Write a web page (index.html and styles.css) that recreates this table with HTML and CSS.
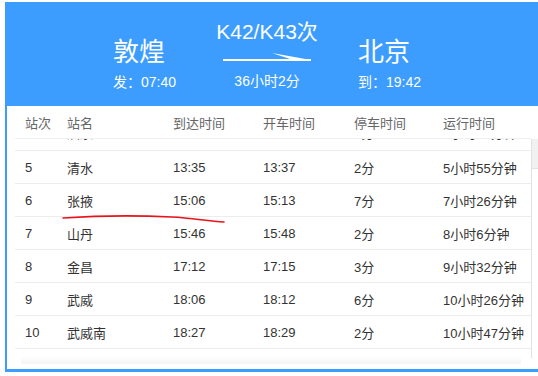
FILE: index.html
```html
<!DOCTYPE html>
<html lang="zh-CN">
<head>
<meta charset="utf-8">
<title>K42/K43次</title>
<link rel="stylesheet" href="styles.css">
</head>
<body>
<div class="frame">
  <div class="hero">
    <div class="end">
      <div class="city">敦煌</div>
      <div class="time">发：07:40</div>
    </div>
    <div class="mid">
      <div class="train">K42/K43次</div>
      <svg class="arrow" width="88" height="10" viewBox="0 0 88 10">
        <rect x="0" y="6" width="88" height="2" fill="#fff"/>
        <polygon points="49,0 88,7 70,7" fill="#fff"/>
      </svg>
      <div class="dur">36小时2分</div>
    </div>
    <div class="end">
      <div class="city">北京</div>
      <div class="time">到：19:42</div>
    </div>
  </div>
  <div class="panel">
    <div class="thead row">
      <span>站次</span><span>站名</span><span>到达时间</span><span>开车时间</span><span>停车时间</span><span>运行时间</span>
    </div>
    <div class="scroll">
      <div class="tbody">
        <div class="row"><span>4</span><span>酒泉</span><span>11:33</span><span>11:40</span><span>7分</span><span>3小时53分钟</span></div>
        <div class="row"><span>5</span><span>清水</span><span>13:35</span><span>13:37</span><span>2分</span><span>5小时55分钟</span></div>
        <div class="row"><span>6</span><span>张掖</span><span>15:06</span><span>15:13</span><span>7分</span><span>7小时26分钟</span></div>
        <div class="row"><span>7</span><span>山丹</span><span>15:46</span><span>15:48</span><span>2分</span><span>8小时6分钟</span></div>
        <div class="row"><span>8</span><span>金昌</span><span>17:12</span><span>17:15</span><span>3分</span><span>9小时32分钟</span></div>
        <div class="row"><span>9</span><span>武威</span><span>18:06</span><span>18:12</span><span>6分</span><span>10小时26分钟</span></div>
        <div class="row"><span>10</span><span>武威南</span><span>18:27</span><span>18:29</span><span>2分</span><span>10小时47分钟</span></div>
      </div>
      <div class="track"><div class="thumb"></div></div>
    </div>
    <div class="fade"></div>
  </div>
  <svg class="mark" width="170" height="14" viewBox="0 0 170 14">
    <path d="M1 6 C 30 4, 70 3, 110 5 C 130 6, 145 9, 162 10" fill="none" stroke="#e8141c" stroke-width="1.6" stroke-linecap="round"/>
  </svg>
</div>
</body>
</html>
```

FILE: styles.css
```css
html, body {
  margin: 0;
  padding: 0;
  background: #fff;
  overflow: hidden;
}
body {
  width: 538px;
  height: 376px;
  font-family: "Liberation Sans", "Noto Sans CJK SC", sans-serif;
}
.frame {
  position: relative;
  margin: 2px 0 0 5px;
  width: 540px;
  height: 367px;
  border-left: 2px solid #3c9dfe;
  border-bottom: 3px solid #3c9dfe;
  box-sizing: content-box;
  background: #fff;
}
.hero {
  margin-left: -2px;
  height: 104px;
  background: #3c9dfe;
  color: #fff;
  display: flex;
  align-items: flex-start;
  padding-left: 108px;
  box-sizing: border-box;
  gap: 36px;
}
.end {
  margin-top: 35px;
  display: flex;
  flex-direction: column;
}
.city {
  font-size: 26px;
  line-height: 30px;
}
.time {
  margin-top: 5px;
  font-size: 14px;
  line-height: 20px;
}
.mid {
  width: 110px;
  margin-top: 17px;
  display: flex;
  flex-direction: column;
  align-items: center;
}
.train {
  font-size: 21px;
  line-height: 26px;
}
.arrow {
  display: block;
  margin-top: 8px;
}
.dur {
  margin-top: 8px;
  font-size: 14px;
  line-height: 20px;
}
.panel {
  padding-left: 8px;
  width: 524px;
}
.row {
  display: grid;
  grid-template-columns: 42px 106px 90px 91px 89px 98px;
  height: 33px;
  align-items: center;
  border-bottom: 1px solid #ececec;
  box-sizing: border-box;
  font-size: 13px;
  color: #333;
}
.row span {
  padding-left: 10px;
  white-space: nowrap;
}
.thead {
  width: 516px;
  color: #666;
  border-bottom-color: #f0f0f0;
}
.scroll {
  position: relative;
  height: 219px;
  overflow: hidden;
  display: flex;
}
.tbody {
  width: 516px;
  margin-top: -21px;
}
.tbody .row {
  height: 33px;
}
.tbody .row:first-child span {
  position: relative;
  top: -2px;
}
.track {
  width: 8px;
  border-left: 1px solid #e2e2e2;
  background: #fff;
}
.thumb {
  height: 29px;
  background: #f1f1f1;
  border-bottom: 1px solid #e2e2e2;
}
.fade {
  margin-top: -2px;
  margin-left: 6px;
  width: 500px;
  height: 8px;
  background: linear-gradient(to bottom, rgba(245,245,245,0), #f4f4f4);
}
.mark {
  position: absolute;
  left: 55px;
  top: 210px;
}
```
